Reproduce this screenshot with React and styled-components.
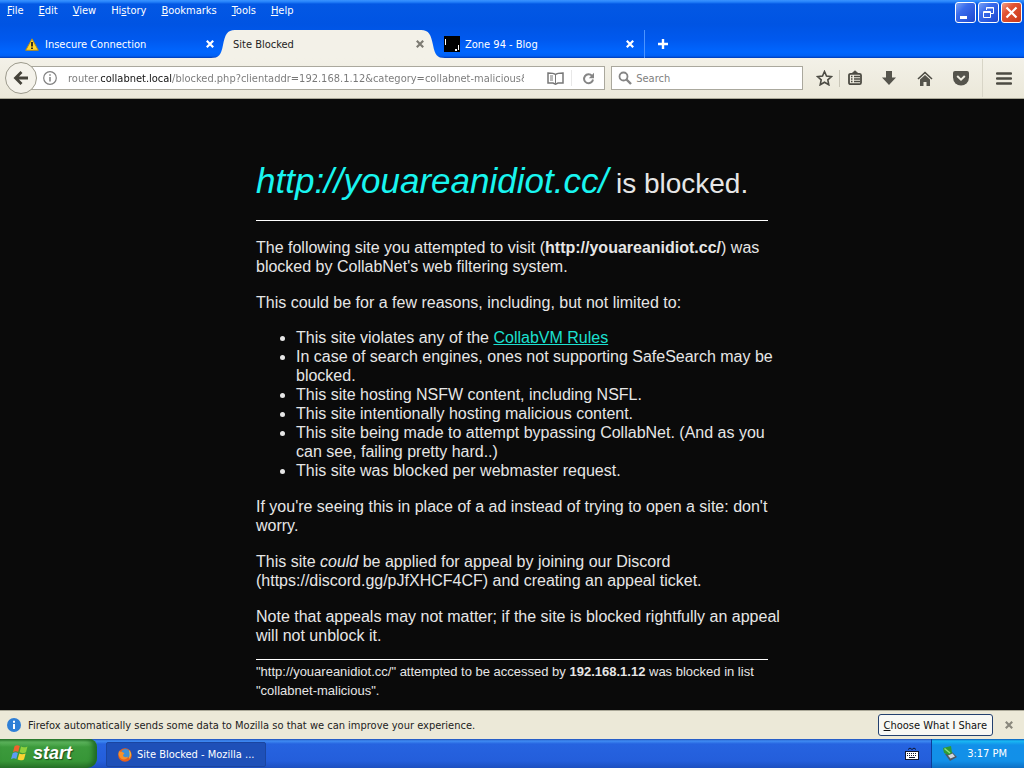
import React, { useState } from "react";
import styled, { createGlobalStyle, css } from "styled-components";

const menus = [
  ["", "F", "ile"],
  ["", "E", "dit"],
  ["", "V", "iew"],
  ["Hi", "s", "tory"],
  ["", "B", "ookmarks"],
  ["", "T", "ools"],
  ["", "H", "elp"],
];

const App = () => {
  const [url, setUrl] = useState(
    "router.collabnet.local/blocked.php?clientaddr=192.168.1.12&category=collabnet-malicious&url=http://youareanidiot.cc/"
  );
  const [query, setQuery] = useState("");

  return (
    <Desktop>
      <GlobalStyle />
      <TitleBar>
        <TopRow>
          <MenuBar>
            {menus.map(([before, key, after]) => (
              <MenuItem key={before + key + after}>
                {before}
                <u>{key}</u>
                {after}
              </MenuItem>
            ))}
          </MenuBar>
          <WindowButtons>
            <WindowButton aria-label="Minimize">
              <svg width="19" height="19" viewBox="0 0 19 19">
                <path d="M4 13h7v3H4z" fill="#fff" />
              </svg>
            </WindowButton>
            <WindowButton aria-label="Restore">
              <svg width="19" height="19" viewBox="0 0 19 19" fill="none" stroke="#fff">
                <path d="M7.5 7V4.5h7v6H12M7 5h8" />
                <path d="M4.5 8.5h7v6h-7zM4 9.5h8" />
              </svg>
            </WindowButton>
            <WindowButton $close aria-label="Close">
              <svg width="19" height="19" viewBox="0 0 19 19">
                <path d="M4.5 4.5l10 10M14.5 4.5l-10 10" stroke="#fff" strokeWidth="2.2" />
              </svg>
            </WindowButton>
          </WindowButtons>
        </TopRow>
        <TabStrip>
          <Tab>
            <WarningIcon />
            <TabTitle>Insecure Connection</TabTitle>
            <TabClose aria-label="Close Insecure Connection">
              <CrossIcon />
            </TabClose>
          </Tab>
          <Tab $active>
            <CurveLeft />
            <TabTitle>Site Blocked</TabTitle>
            <TabClose $dark aria-label="Close Site Blocked">
              <CrossIcon />
            </TabClose>
            <CurveRight />
          </Tab>
          <Tab $last>
            <ZoneIcon />
            <TabTitle>Zone 94 - Blog</TabTitle>
            <TabClose aria-label="Close Zone 94">
              <CrossIcon />
            </TabClose>
          </Tab>
          <NewTab aria-label="New tab">
            <svg width="12" height="12" viewBox="0 0 12 12">
              <path d="M6 1v10M1 6h10" stroke="#fff" strokeWidth="2.4" />
            </svg>
          </NewTab>
        </TabStrip>
      </TitleBar>

      <NavBar>
        <BackButton aria-label="Back">
          <svg width="16" height="16" viewBox="0 0 16 16" fill="none" stroke="#45433a" strokeWidth="2.8">
            <path d="M8.5 2L2.5 8l6 6M3 8h12" />
          </svg>
        </BackButton>
        <UrlBox>
          <InfoButton aria-label="Site information">
            <svg width="14" height="14" viewBox="0 0 14 14" fill="none" stroke="#808080">
              <circle cx="7" cy="7" r="6.3" strokeWidth="1.2" />
              <path d="M7 6v4.5M7 3.2v1.6" strokeWidth="1.5" />
            </svg>
          </InfoButton>
          <UrlInput aria-label="Address" value={url} onChange={(e) => setUrl(e.target.value)} />
          <BoxButton aria-label="Reader view">
            <svg width="17" height="13" viewBox="0 0 17 13" fill="none" stroke="#777" strokeWidth="1.5">
              <path d="M8.5 2.5C7 1.2 5 1 1 1v10h5l2.5 1.2L11 11h5V1c-4 0-6 .2-7.5 1.5z" />
              <path d="M8.5 2.5v9M3 4h3M3 6h3M3 8h3" strokeWidth="1" />
            </svg>
          </BoxButton>
          <BoxButton $ruled aria-label="Reload">
            <svg width="13" height="13" viewBox="0 0 13 13">
              <path d="M10 3.8A4.5 4.5 0 1 0 11 7.5" fill="none" stroke="#858585" strokeWidth="2" />
              <path d="M12 .8v5.4H6.8z" fill="#858585" />
            </svg>
          </BoxButton>
        </UrlBox>
        <SearchBox>
          <svg width="14" height="14" viewBox="0 0 14 14" fill="none" stroke="#858585">
            <circle cx="5.5" cy="5.5" r="4" strokeWidth="1.8" />
            <path d="M8.5 8.5L13 13" strokeWidth="2.4" />
          </svg>
          <SearchInput
            aria-label="Search"
            placeholder="Search"
            value={query}
            onChange={(e) => setQuery(e.target.value)}
          />
        </SearchBox>
        <Tools>
          <ToolButton $narrow aria-label="Bookmark this page">
            <svg width="17" height="16" viewBox="0 0 17 16">
              <path
                d="M8.5 1.5l2 4.6 5 .5-3.7 3.3 1 4.900-4.3-2.5-4.3 2.5 1-4.9L1.5 6.600l5-.5z"
                fill="none"
                stroke="#4c4b43"
                strokeWidth="1.6"
              />
            </svg>
          </ToolButton>
          <ToolButton $ruled aria-label="Show bookmarks">
            <svg width="14" height="16" viewBox="0 0 14 16" fill="none" stroke="#4c4b43">
              <rect x="1" y="3.8" width="12" height="10.4" rx="1.5" strokeWidth="1.8" />
              <path d="M4 3.5L7 .8l3 2.7z" fill="#4c4b43" />
              <path d="M3 6.5h1.5M6 6.5h6M3 9h1.5M6 9h6M3 11.5h1.5M6 11.5h6" strokeWidth="1.3" />
            </svg>
          </ToolButton>
          <ToolButton aria-label="Downloads">
            <svg width="14" height="14" viewBox="0 0 14 14">
              <path d="M4 0h6v6.5h4L7 14 0 6.5h4z" fill="#55544c" />
            </svg>
          </ToolButton>
          <ToolButton aria-label="Home">
            <svg width="16" height="15" viewBox="0 0 16 15">
              <path d="M1 8l7-6.5L15 8" fill="none" stroke="#4c4b43" strokeWidth="1.6" />
              <path d="M3 8.500L8 4l5 4.500V15H9.500v-4h-3v4H3z" fill="#55544c" />
            </svg>
          </ToolButton>
          <ToolButton aria-label="Save to Pocket">
            <svg width="16" height="15" viewBox="0 0 16 15">
              <path d="M2 0h12a2 2 0 0 1 2 2v4.500a8 8 0 0 1-16 0V2a2 2 0 0 1 2-2z" fill="#55544c" />
              <path d="M4.200 5L8 8.700 11.800 5" fill="none" stroke="#f0eee2" strokeWidth="2" />
            </svg>
          </ToolButton>
          <ToolButton $menu aria-label="Open menu">
            <svg width="16" height="13" viewBox="0 0 16 13">
              <path d="M1 1.5h14M1 6.5h14M1 11.5h14" stroke="#4c4b43" strokeWidth="2.4" strokeLinecap="round" />
            </svg>
          </ToolButton>
        </Tools>
      </NavBar>

      <Page>
        <Article>
          <Heading>
            <em>http://youareanidiot.cc/</em> is blocked.
          </Heading>
          <Rule />
          <Text>
            The following site you attempted to visit (<b>http://youareanidiot.cc/</b>) was
            <br />
            blocked by CollabNet's web filtering system.
          </Text>
          <Text>This could be for a few reasons, including, but not limited to:</Text>
          <Reasons>
            <li>
              This site violates any of the <RulesLink href="#rules">CollabVM Rules</RulesLink>
            </li>
            <li>
              In case of search engines, ones not supporting SafeSearch may be
              <br />
              blocked.
            </li>
            <li>This site hosting NSFW content, including NSFL.</li>
            <li>This site intentionally hosting malicious content.</li>
            <li>
              This site being made to attempt bypassing CollabNet. (And as you
              <br />
              can see, failing pretty hard..)
            </li>
            <li>This site was blocked per webmaster request.</li>
          </Reasons>
          <Text>
            If you're seeing this in place of a ad instead of trying to open a site: don't
            <br />
            worry.
          </Text>
          <Text>
            This site <i>could</i> be applied for appeal by joining our Discord
            <br />
            (https://discord.gg/pJfXHCF4CF) and creating an appeal ticket.
          </Text>
          <Text>
            Note that appeals may not matter; if the site is blocked rightfully an appeal
            <br />
            will not unblock it.
          </Text>
          <Rule />
          <Footnote>
            "http://youareanidiot.cc/" attempted to be accessed by <b>192.168.1.12</b> was blocked in list
            <br />
            "collabnet-malicious".
          </Footnote>
        </Article>
      </Page>

      <Notice>
        <svg width="14" height="14" viewBox="0 0 14 14">
          <circle cx="7" cy="7" r="7" fill="#2f7fd6" />
          <path d="M7 6v5M7 2.8v2" stroke="#fff" strokeWidth="2" />
        </svg>
        <NoticeText>
          Firefox automatically sends some data to Mozilla so that we can improve your experience.
        </NoticeText>
        <ShareButton>
          <u>C</u>hoose What I Share
        </ShareButton>
        <NoticeClose aria-label="Dismiss">
          <CrossIcon />
        </NoticeClose>
      </Notice>

      <Taskbar>
        <StartButton>
          <svg width="18" height="17" viewBox="0 0 18 17">
            <path d="M3.5 2.2C5.5.8 7 1 8.800 2L7.200 8C5.500 7 4 7 2 8.200z" fill="#f0622d" />
            <path d="M10 2.6c2 1 3.700 1 6.500-.2L15 8.300c-2.500 1.200-4.500 1-6.400 0z" fill="#8fd03c" />
            <path d="M1.7 9.3c2-1.200 3.500-1.200 5.200-.2l-1.600 6C3.600 14 2 14 0 15.300z" fill="#5d9cf5" />
            <path d="M8.200 9.600c2 1 4 1 6.400 0L13 15.500c-2.500 1.200-4.500 1-6.400 0z" fill="#fbd332" />
          </svg>
          start
        </StartButton>
        <TaskButton>
          <FirefoxIcon />
          Site Blocked - Mozilla ...
        </TaskButton>
        <LanguageBar aria-label="Keyboard">
          <svg width="14" height="13" viewBox="0 0 14 13">
            <path d="M3 2.500l2-1.500 2 1.500L9 1l2 1.500" fill="none" stroke="#101830" />
            <rect x=".5" y="4.5" width="13" height="8" fill="#fff" stroke="#101830" />
            <path d="M2 6.500h10M2 8.500h10" stroke="#101830" strokeDasharray="1 1" />
            <path d="M4 10.500h6" stroke="#101830" />
          </svg>
        </LanguageBar>
        <Tray>
          <svg width="14" height="15" viewBox="0 0 14 15">
            <path d="M2 8l7-2 5 5-7 4z" fill="#4f5764" />
            <path d="M5 9.500l4.500-2 2.500 3-4.500 2z" fill="#cfd6dc" />
            <path d="M0 2l8-2 1 7-3.500 2L1 7z" fill="#2f9a35" />
            <path d="M1.500 2.500L7 7" stroke="#8be07c" strokeWidth="1.5" />
          </svg>
          <time>3:17 PM</time>
        </Tray>
      </Taskbar>
    </Desktop>
  );
};

const CrossIcon = () => (
  <svg width="8" height="8" viewBox="0 0 8 8">
    <path d="M.8.8l6.400 6.400M7.200.8L.8 7.200" stroke="currentColor" strokeWidth="2.2" />
  </svg>
);

const WarningIcon = () => (
  <svg width="14" height="13" viewBox="0 0 14 13">
    <path d="M7 .8L13.300 12.300H.7z" fill="#ffd52e" stroke="#b58b18" strokeLinejoin="round" />
    <path d="M7 4v4.500M7 9.500v1.600" stroke="#222" strokeWidth="1.8" />
  </svg>
);

const ZoneIcon = () => (
  <svg width="16" height="16" viewBox="0 0 16 16">
    <path d="M0 0h16v16H0z" />
    <path d="M1 3h1v6H1zM14 9h1v5h-1zM11 13h2v2h-2z" fill="#fff" />
  </svg>
);

const FirefoxIcon = () => (
  <svg width="14" height="14" viewBox="0 0 14 14">
    <circle cx="7" cy="7" r="6.8" fill="#e8601c" />
    <circle cx="7.6" cy="5.8" r="4.7" fill="#3d8fd6" />
    <path d="M1 3c1 .8 2 .7 3.500 1L6.500 5.500 5 7c0 2 2.500 3 5 1.500-1 3.500-6 4-8 1S.500 5 1 3z" fill="#f6902a" />
    <path d="M11 2c2.500 2.500 2.500 6.500 0 9 .8-2.500 1-5 0-9z" fill="#fbc53a" />
  </svg>
);

const CurveLeft = () => (
  <Curve $side="left" width="24" height="28" viewBox="0 0 24 28">
    <path d="M0 28c8 0 10-3 12-13S16 0 24 0v28z" fill="#f3f1e8" />
  </Curve>
);

const CurveRight = () => (
  <Curve $side="right" width="24" height="28" viewBox="0 0 24 28">
    <path d="M24 28c-8 0-10-3-12-13S8 0 0 0v28z" fill="#f3f1e8" />
  </Curve>
);

const GlobalStyle = createGlobalStyle`
  * {
    box-sizing: border-box;
  }

  body {
    margin: 0;
    background: #0a0a0a;
    font-family: "DejaVu Sans Condensed", "DejaVu Sans", sans-serif;
    font-size: 11px;
  }

  button, input {
    margin: 0;
    padding: 0;
    border: none;
    background: none;
    color: inherit;
    font: inherit;
  }

  svg {
    display: block;
    flex: none;
  }
`;

const Desktop = styled.div`
  display: flex;
  flex-direction: column;
  min-height: 100vh;
`;

const TitleBar = styled.header`
  color: #fff;
  background: linear-gradient(#3a93ff 0, #2380fa 2px, #0358e4 4px, #0054e3 24px, #0059ef 40px, #0066ff 52px, #0060f4 56px, #003bb5 58px);
`;

const TopRow = styled.div`
  display: flex;
  justify-content: space-between;
  height: 30px;
`;

const MenuBar = styled.nav`
  display: flex;
  align-items: center;
  gap: 15px;
  height: 21px;
  padding-left: 7px;
`;

const MenuItem = styled.button`
  u {
    text-underline-offset: 1px;
  }
`;

const WindowButtons = styled.div`
  display: flex;
  gap: 2px;
  padding: 2px 2px 0 0;
`;

const WindowButton = styled.button`
  display: flex;
  align-items: center;
  justify-content: center;
  width: 21px;
  height: 21px;
  border: 1px solid #fff;
  border-radius: 3px;
  background: ${(props) =>
    props.$close
      ? "linear-gradient(135deg, #f0a088, #e25434 35%, #c83818)"
      : "linear-gradient(135deg, #7ba3f5, #3a6cec 35%, #1c47cf)"};
`;

const TabStrip = styled.div`
  display: flex;
  height: 28px;
  padding-left: 13px;
`;

const Tab = styled.div`
  position: relative;
  display: flex;
  align-items: center;
  gap: 6px;
  flex: 0 1 210px;
  min-width: 0;
  padding: 0 5px 0 12px;

  ${(props) =>
    props.$active &&
    css`
      z-index: 1;
      padding-left: 10px;
      color: #222;
      background: linear-gradient(90deg, transparent 11px, #f3f1e8 11px, #f3f1e8 calc(100% - 11px), transparent calc(100% - 11px));
    `}

  ${(props) =>
    props.$last &&
    css`
      gap: 5px;
      flex-basis: 212px;
      padding: 0 6px 0 11px;
      border-right: 1px solid #4b94ff;
    `}
`;

const Curve = styled.svg`
  position: absolute;
  top: 0;
  z-index: -1;
  ${(props) => props.$side}: -12px;
`;

const TabTitle = styled.button`
  flex: 1;
  min-width: 0;
  overflow: hidden;
  text-align: left;
  white-space: nowrap;
`;

const TabClose = styled.button`
  padding: 4px;
  color: ${(props) => (props.$dark ? "#7d7b73" : "#fff")};
`;

const NewTab = styled.button`
  padding: 0 12px;
`;

const NavBar = styled.div`
  display: flex;
  align-items: center;
  height: 41px;
  padding-left: 5px;
  border-bottom: 1px solid #aaa898;
  background: linear-gradient(#f3f1e8, #ebe8d9);
`;

const BackButton = styled.button`
  z-index: 1;
  display: flex;
  flex: none;
  align-items: center;
  justify-content: center;
  width: 32px;
  height: 32px;
  border: 1px solid #9c9a8c;
  border-radius: 50%;
  background: #f4f2ea;
`;

const UrlBox = styled.div`
  display: flex;
  align-items: center;
  flex: 574 1 0;
  min-width: 0;
  height: 24px;
  margin-left: -6px;
  padding-left: 11px;
  border: 1px solid #aaa89d;
  background: #fff;
`;

const InfoButton = styled.button`
  margin-right: 11px;
`;

/* the domain part of the address is darker than the rest */
const UrlInput = styled.input`
  flex: 1;
  min-width: 0;
  outline: none;
  color: transparent;
  caret-color: #222;
  background: linear-gradient(90deg, #777 33px, #111 33px, #111 104px, #777 104px);
  background-clip: text;
  -webkit-background-clip: text;
`;

const BoxButton = styled.button`
  display: flex;
  align-items: center;
  justify-content: center;
  width: 33px;
  height: 16px;
  margin-left: ${(props) => (props.$ruled ? "0" : "14px")};
  border-left: 1px solid ${(props) => (props.$ruled ? "#e8e8e8" : "transparent")};
`;

const SearchBox = styled.label`
  display: flex;
  align-items: center;
  gap: 4px;
  flex: 188 1 0;
  min-width: 0;
  height: 24px;
  margin-left: 6px;
  padding-left: 6px;
  border: 1px solid #aaa89d;
  background: #fff;
`;

const SearchInput = styled.input`
  flex: 1;
  min-width: 0;
  outline: none;
  color: #222;

  &::placeholder {
    color: #808080;
  }
`;

const Tools = styled.div`
  display: flex;
  align-items: center;
  padding-left: 6px;
`;

const ToolButton = styled.button`
  display: flex;
  align-items: center;
  justify-content: center;
  width: ${(props) => (props.$narrow ? "30px" : props.$ruled ? "31px" : "36px")};
  height: 17px;
  border-left: 1px solid ${(props) => (props.$ruled ? "#c9c6b8" : "transparent")};

  ${(props) =>
    props.$menu &&
    css`
      width: 42px;
      height: 38px;
      margin-left: 4px;
      border-left-color: #d8d5c7;
    `}
`;

const Page = styled.main`
  flex: 1;
  color: #e6e6e6;
  background: #0a0a0a;
  font-family: "Liberation Sans", Arial, sans-serif;
  font-size: 16px;
  line-height: 19px;
`;

const Article = styled.article`
  width: 50%;
  min-width: 512px;
  margin: 0 auto;
  padding-top: 61px;
  white-space: nowrap;
`;

const Heading = styled.h1`
  margin: 0 0 16px;
  font-size: 28px;
  font-weight: 400;
  line-height: 41px;

  em {
    color: #19f5f0;
    font-size: 35px;
  }
`;

const Rule = styled.hr`
  margin: 0;
  border: none;
  border-top: 1px solid #fff;
`;

const Text = styled.p`
  margin: 17px 0 14px;
`;

const Reasons = styled.ul`
  margin: 16px 0;
  padding-left: 40px;
`;

const RulesLink = styled.a`
  color: #1ce0d0;
`;

const Footnote = styled.p`
  margin: 2px 0 8px;
  font-size: 13px;
`;

const Notice = styled.section`
  display: flex;
  align-items: center;
  height: 29px;
  padding: 0 11px 0 7px;
  border-top: 1px solid #aaa898;
  color: #222;
  background: #ece9d8;
`;

const NoticeText = styled.span`
  flex: 1;
  padding-left: 7px;
`;

const ShareButton = styled.button`
  height: 22px;
  padding: 0 5px;
  border: 1px solid #23406f;
  border-radius: 3px;
  color: #111;
  background: #f8f8f4;
`;

const NoticeClose = styled.button`
  padding-left: 12px;
  color: #8a887d;
`;

const Taskbar = styled.footer`
  display: flex;
  align-items: center;
  height: 29px;
  color: #fff;
  background: linear-gradient(#1f4fb8 0, #3f8cf3 2px, #2663e0 5px, #245edb 22px, #1d4fc0 29px);
`;

const StartButton = styled.button`
  display: flex;
  align-items: center;
  gap: 4px;
  width: 97px;
  height: 29px;
  padding: 0 0 2px 11px;
  border-radius: 0 8px 10px 0;
  background: linear-gradient(#2f7d2f 0, #5fb75f 3px, #3c9a3c 8px, #379637 22px, #2a762a 29px);
  box-shadow: inset -4px 0 5px #1f6a24;
  font: italic bold 18px/20px "Liberation Sans", Arial, sans-serif;
  text-shadow: 1px 1px 1px #1c4a1c;
`;

const TaskButton = styled.button`
  display: flex;
  align-items: center;
  gap: 5px;
  width: 160px;
  height: 25px;
  margin: 2px 0 0 9px;
  padding-left: 11px;
  border: 1px solid #1a45a0;
  border-radius: 2px;
  background: #1e50b8;
  white-space: nowrap;
`;

const LanguageBar = styled.button`
  margin: 0 12px 0 auto;
`;

const Tray = styled.div`
  display: flex;
  align-items: center;
  gap: 10px;
  height: 29px;
  padding: 0 17px 0 11px;
  border-left: 1px solid #0c3d99;
  background: linear-gradient(#0c59b9 0, #19b9f3 2px, #1290e9 6px, #1290e8 22px, #0d6fc4 29px);
`;

export default App;
